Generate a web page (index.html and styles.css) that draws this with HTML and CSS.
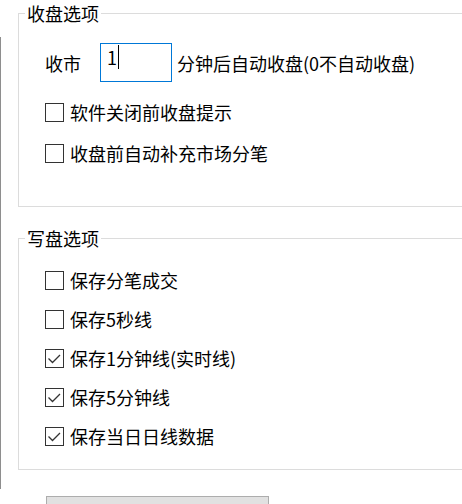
FILE: index.html
```html
<!DOCTYPE html>
<html lang="zh-CN">
<head>
<meta charset="utf-8">
<title>收盘选项</title>
<link rel="stylesheet" href="styles.css">
</head>
<body>
<div class="page">
  <div class="strip"></div>
  <div class="main">
    <fieldset class="group group-close">
      <legend>收盘选项</legend>
      <div class="input-row">
        <span class="label">收市</span>
        <div class="textbox"><span class="val">1</span><span class="caret"></span></div>
        <span class="suffix">分钟后自动收盘(0不自动收盘)</span>
      </div>
      <div class="rows rows-close">
        <label class="check-row"><span class="box"></span><span class="text">软件关闭前收盘提示</span></label>
        <label class="check-row"><span class="box"></span><span class="text">收盘前自动补充市场分笔</span></label>
      </div>
    </fieldset>
    <fieldset class="group group-write">
      <legend>写盘选项</legend>
      <div class="rows rows-write">
        <label class="check-row"><span class="box"></span><span class="text">保存分笔成交</span></label>
        <label class="check-row"><span class="box"></span><span class="text">保存5秒线</span></label>
        <label class="check-row"><span class="box"><svg viewBox="0 0 19 19" width="19" height="19"><path d="M3.5 9.5 L7.5 13.5 L15 6" fill="none" stroke="#333" stroke-width="1.3"/></svg></span><span class="text">保存1分钟线(实时线)</span></label>
        <label class="check-row"><span class="box"><svg viewBox="0 0 19 19" width="19" height="19"><path d="M3.5 9.5 L7.5 13.5 L15 6" fill="none" stroke="#333" stroke-width="1.3"/></svg></span><span class="text">保存5分钟线</span></label>
        <label class="check-row"><span class="box"><svg viewBox="0 0 19 19" width="19" height="19"><path d="M3.5 9.5 L7.5 13.5 L15 6" fill="none" stroke="#333" stroke-width="1.3"/></svg></span><span class="text">保存当日日线数据</span></label>
      </div>
    </fieldset>
    <div class="button"></div>
  </div>
</div>
</body>
</html>
```

FILE: styles.css
```css
html, body {
  margin: 0;
  padding: 0;
  background: #ffffff;
  overflow: hidden;
}
body {
  width: 462px;
  height: 504px;
  font-family: "Noto Sans CJK SC", "Noto Sans", sans-serif;
  font-size: 18px;
  color: #000;
}
.page {
  display: flex;
  align-items: flex-start;
}
.strip {
  flex-shrink: 0;
  width: 1px;
  height: 452px;
  margin-top: 37px;
  background: #8e8e8e;
}
.main {
  flex-shrink: 0;
  width: 444px;
  margin-left: 17px;
  padding-top: 1px;
  display: flex;
  flex-direction: column;
  align-items: flex-start;
}
.group {
  box-sizing: border-box;
  width: 444px;
  margin: 0;
  border: 1px solid #dcdcdc;
  border-right: none;
  padding: 0 0 0 6px;
  min-width: 0;
}
.group legend {
  padding: 0 2px;
  font-size: 18px;
  line-height: 24px;
  height: 24px;
}
.group-close {
  padding-bottom: 38px;
}
.group-write {
  margin-top: 19px;
  padding-bottom: 18px;
}
.input-row {
  display: flex;
  align-items: center;
  height: 39px;
  margin-top: 18px;
  margin-left: 20px;
  line-height: 24px;
}
.label {
  width: 55px;
}
.textbox {
  box-sizing: border-box;
  width: 72px;
  height: 39px;
  border: 1px solid #0078d7;
  padding: 1px 0 0 6px;
  display: flex;
  align-items: flex-start;
  line-height: 24px;
}
.caret {
  display: inline-block;
  width: 1px;
  height: 24px;
  margin-left: 1px;
  background: #000;
}
.suffix {
  margin-left: 5px;
}
.rows {
  display: flex;
  flex-direction: column;
  margin-left: 20px;
}
.rows-close {
  margin-top: 15px;
  gap: 11px;
}
.rows-write {
  margin-top: 15px;
  gap: 9px;
}
.check-row {
  display: flex;
  align-items: center;
  height: 30px;
  line-height: 24px;
}
.box {
  box-sizing: border-box;
  width: 19px;
  height: 19px;
  border: 1px solid #333333;
  background: #fff;
  position: relative;
  flex-shrink: 0;
}
.box svg {
  position: absolute;
  left: -1px;
  top: -1px;
}
.text {
  margin-left: 6px;
}
.button {
  box-sizing: border-box;
  width: 223px;
  height: 30px;
  margin-top: 26px;
  margin-left: 28px;
  background: #e1e1e1;
  border: 1px solid #adadad;
}
```
